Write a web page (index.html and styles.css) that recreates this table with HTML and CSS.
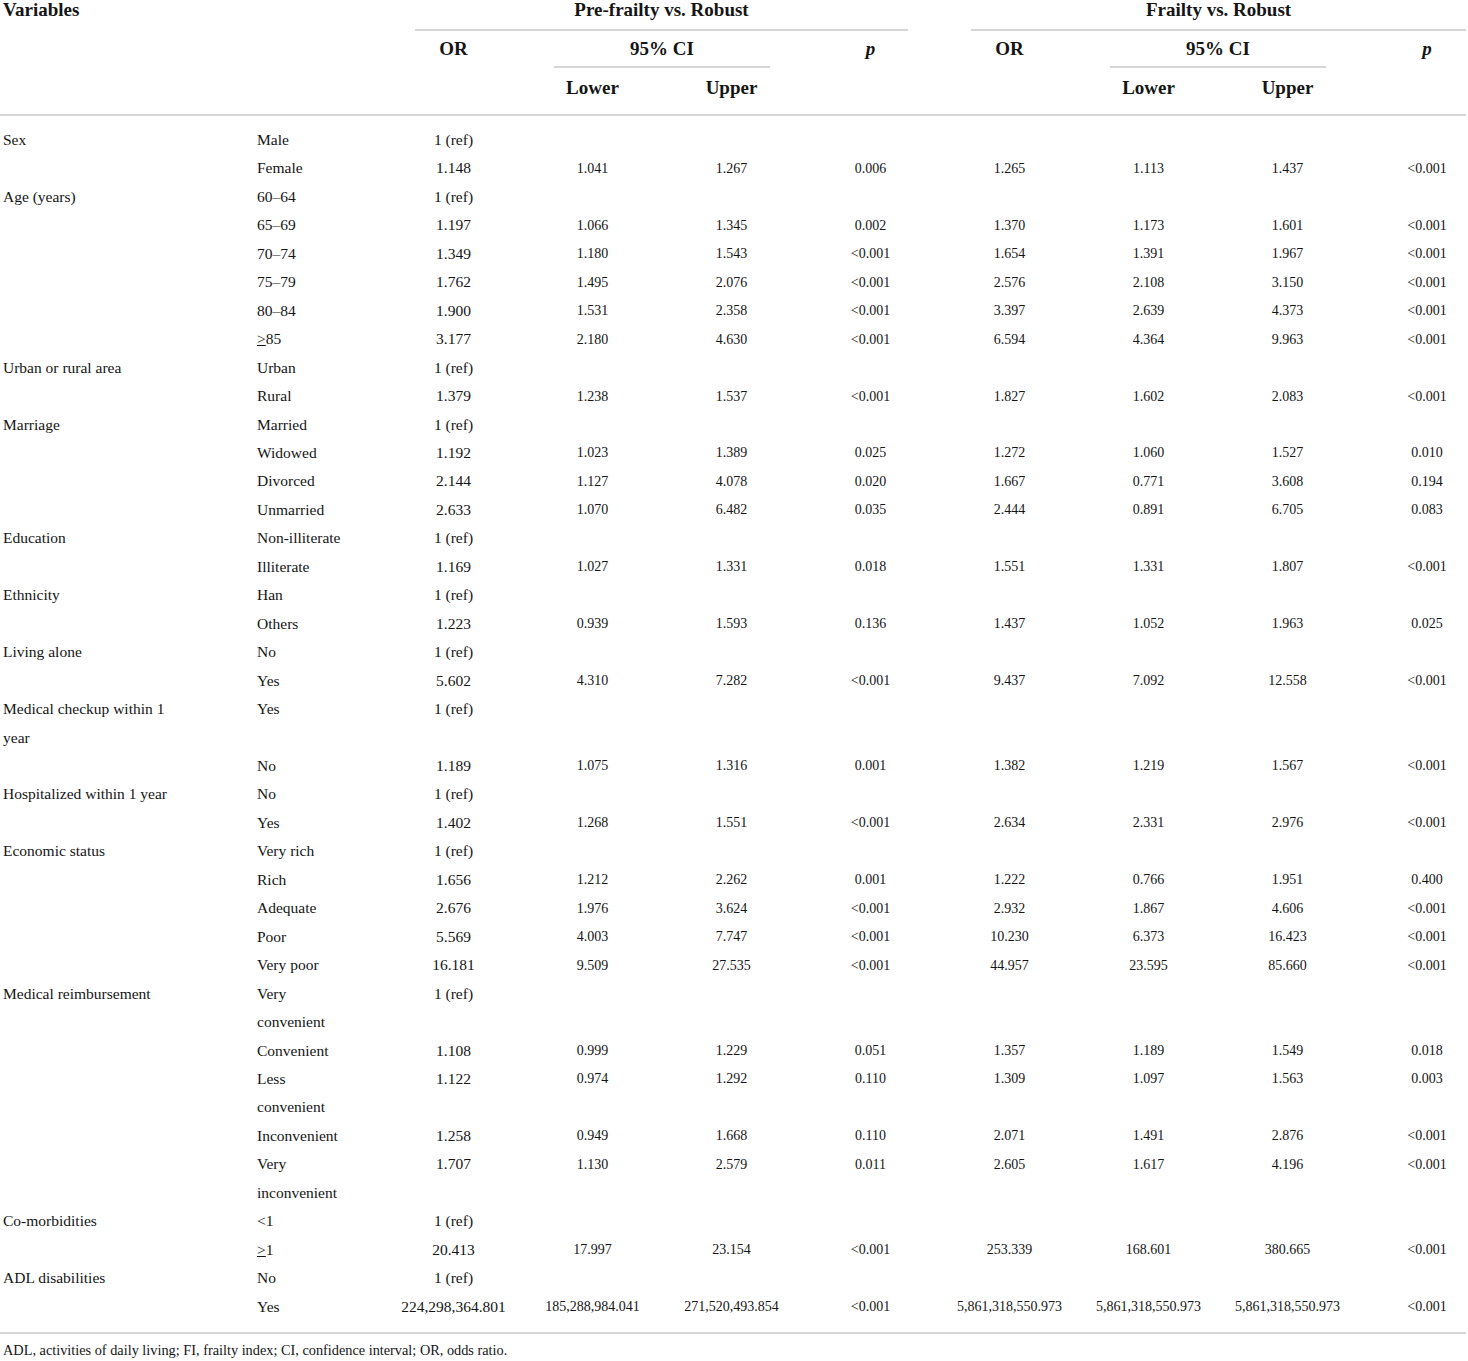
FILE: index.html
```html
<!DOCTYPE html>
<html>
<head>
    <link rel="stylesheet" href="styles.css">
</head>
<body>
    <table class="or-table">
        <colgroup>
            <col class="w-var"><col class="w-sub">
            <col class="w-num"><col class="w-num"><col class="w-num"><col class="w-num">
            <col class="w-num"><col class="w-num"><col class="w-num"><col class="w-last">
        </colgroup>
        <thead>
            <tr>
                <th class="h-var" rowspan="3" colspan="2">Variables</th>
                <th class="h-group" colspan="4"><div class="rule">Pre-frailty vs. Robust</div></th>
                <th class="h-group h-group-last" colspan="4"><div class="rule">Frailty vs. Robust</div></th>
            </tr>
            <tr>
                <th class="h-mid" rowspan="2">OR</th>
                <th class="h-ci" colspan="2"><div class="rule">95% CI</div></th>
                <th class="h-mid" rowspan="2"><i>p</i></th>
                <th class="h-mid" rowspan="2">OR</th>
                <th class="h-ci" colspan="2"><div class="rule">95% CI</div></th>
                <th class="h-mid last" rowspan="2"><i>p</i></th>
            </tr>
            <tr>
                <th class="h-low">Lower</th>
                <th class="h-low">Upper</th>
                <th class="h-low">Lower</th>
                <th class="h-low">Upper</th>
            </tr>
        </thead>
        <tbody>
            <tr><td class="var">Sex</td><td class="sub">Male</td><td class="or">1 (ref)</td><td></td><td></td><td></td><td></td><td></td><td></td><td></td></tr>
            <tr><td class="var"></td><td class="sub">Female</td><td class="or">1.148</td><td>1.041</td><td>1.267</td><td>0.006</td><td>1.265</td><td>1.113</td><td>1.437</td><td class="last">&lt;0.001</td></tr>
            <tr><td class="var">Age (years)</td><td class="sub">60–64</td><td class="or">1 (ref)</td><td></td><td></td><td></td><td></td><td></td><td></td><td></td></tr>
            <tr><td class="var"></td><td class="sub">65–69</td><td class="or">1.197</td><td>1.066</td><td>1.345</td><td>0.002</td><td>1.370</td><td>1.173</td><td>1.601</td><td class="last">&lt;0.001</td></tr>
            <tr><td class="var"></td><td class="sub">70–74</td><td class="or">1.349</td><td>1.180</td><td>1.543</td><td>&lt;0.001</td><td>1.654</td><td>1.391</td><td>1.967</td><td class="last">&lt;0.001</td></tr>
            <tr><td class="var"></td><td class="sub">75–79</td><td class="or">1.762</td><td>1.495</td><td>2.076</td><td>&lt;0.001</td><td>2.576</td><td>2.108</td><td>3.150</td><td class="last">&lt;0.001</td></tr>
            <tr><td class="var"></td><td class="sub">80–84</td><td class="or">1.900</td><td>1.531</td><td>2.358</td><td>&lt;0.001</td><td>3.397</td><td>2.639</td><td>4.373</td><td class="last">&lt;0.001</td></tr>
            <tr><td class="var"></td><td class="sub"><u>&gt;</u>85</td><td class="or">3.177</td><td>2.180</td><td>4.630</td><td>&lt;0.001</td><td>6.594</td><td>4.364</td><td>9.963</td><td class="last">&lt;0.001</td></tr>
            <tr><td class="var">Urban or rural area</td><td class="sub">Urban</td><td class="or">1 (ref)</td><td></td><td></td><td></td><td></td><td></td><td></td><td></td></tr>
            <tr><td class="var"></td><td class="sub">Rural</td><td class="or">1.379</td><td>1.238</td><td>1.537</td><td>&lt;0.001</td><td>1.827</td><td>1.602</td><td>2.083</td><td class="last">&lt;0.001</td></tr>
            <tr><td class="var">Marriage</td><td class="sub">Married</td><td class="or">1 (ref)</td><td></td><td></td><td></td><td></td><td></td><td></td><td></td></tr>
            <tr><td class="var"></td><td class="sub">Widowed</td><td class="or">1.192</td><td>1.023</td><td>1.389</td><td>0.025</td><td>1.272</td><td>1.060</td><td>1.527</td><td class="last">0.010</td></tr>
            <tr><td class="var"></td><td class="sub">Divorced</td><td class="or">2.144</td><td>1.127</td><td>4.078</td><td>0.020</td><td>1.667</td><td>0.771</td><td>3.608</td><td class="last">0.194</td></tr>
            <tr><td class="var"></td><td class="sub">Unmarried</td><td class="or">2.633</td><td>1.070</td><td>6.482</td><td>0.035</td><td>2.444</td><td>0.891</td><td>6.705</td><td class="last">0.083</td></tr>
            <tr><td class="var">Education</td><td class="sub">Non-illiterate</td><td class="or">1 (ref)</td><td></td><td></td><td></td><td></td><td></td><td></td><td></td></tr>
            <tr><td class="var"></td><td class="sub">Illiterate</td><td class="or">1.169</td><td>1.027</td><td>1.331</td><td>0.018</td><td>1.551</td><td>1.331</td><td>1.807</td><td class="last">&lt;0.001</td></tr>
            <tr><td class="var">Ethnicity</td><td class="sub">Han</td><td class="or">1 (ref)</td><td></td><td></td><td></td><td></td><td></td><td></td><td></td></tr>
            <tr><td class="var"></td><td class="sub">Others</td><td class="or">1.223</td><td>0.939</td><td>1.593</td><td>0.136</td><td>1.437</td><td>1.052</td><td>1.963</td><td class="last">0.025</td></tr>
            <tr><td class="var">Living alone</td><td class="sub">No</td><td class="or">1 (ref)</td><td></td><td></td><td></td><td></td><td></td><td></td><td></td></tr>
            <tr><td class="var"></td><td class="sub">Yes</td><td class="or">5.602</td><td>4.310</td><td>7.282</td><td>&lt;0.001</td><td>9.437</td><td>7.092</td><td>12.558</td><td class="last">&lt;0.001</td></tr>
            <tr><td class="var">Medical checkup within 1 year</td><td class="sub">Yes</td><td class="or">1 (ref)</td><td></td><td></td><td></td><td></td><td></td><td></td><td></td></tr>
            <tr><td class="var"></td><td class="sub">No</td><td class="or">1.189</td><td>1.075</td><td>1.316</td><td>0.001</td><td>1.382</td><td>1.219</td><td>1.567</td><td class="last">&lt;0.001</td></tr>
            <tr><td class="var">Hospitalized within 1 year</td><td class="sub">No</td><td class="or">1 (ref)</td><td></td><td></td><td></td><td></td><td></td><td></td><td></td></tr>
            <tr><td class="var"></td><td class="sub">Yes</td><td class="or">1.402</td><td>1.268</td><td>1.551</td><td>&lt;0.001</td><td>2.634</td><td>2.331</td><td>2.976</td><td class="last">&lt;0.001</td></tr>
            <tr><td class="var">Economic status</td><td class="sub">Very rich</td><td class="or">1 (ref)</td><td></td><td></td><td></td><td></td><td></td><td></td><td></td></tr>
            <tr><td class="var"></td><td class="sub">Rich</td><td class="or">1.656</td><td>1.212</td><td>2.262</td><td>0.001</td><td>1.222</td><td>0.766</td><td>1.951</td><td class="last">0.400</td></tr>
            <tr><td class="var"></td><td class="sub">Adequate</td><td class="or">2.676</td><td>1.976</td><td>3.624</td><td>&lt;0.001</td><td>2.932</td><td>1.867</td><td>4.606</td><td class="last">&lt;0.001</td></tr>
            <tr><td class="var"></td><td class="sub">Poor</td><td class="or">5.569</td><td>4.003</td><td>7.747</td><td>&lt;0.001</td><td>10.230</td><td>6.373</td><td>16.423</td><td class="last">&lt;0.001</td></tr>
            <tr><td class="var"></td><td class="sub">Very poor</td><td class="or">16.181</td><td>9.509</td><td>27.535</td><td>&lt;0.001</td><td>44.957</td><td>23.595</td><td>85.660</td><td class="last">&lt;0.001</td></tr>
            <tr><td class="var">Medical reimbursement</td><td class="sub">Very convenient</td><td class="or">1 (ref)</td><td></td><td></td><td></td><td></td><td></td><td></td><td></td></tr>
            <tr><td class="var"></td><td class="sub">Convenient</td><td class="or">1.108</td><td>0.999</td><td>1.229</td><td>0.051</td><td>1.357</td><td>1.189</td><td>1.549</td><td class="last">0.018</td></tr>
            <tr><td class="var"></td><td class="sub">Less convenient</td><td class="or">1.122</td><td>0.974</td><td>1.292</td><td>0.110</td><td>1.309</td><td>1.097</td><td>1.563</td><td class="last">0.003</td></tr>
            <tr><td class="var"></td><td class="sub">Inconvenient</td><td class="or">1.258</td><td>0.949</td><td>1.668</td><td>0.110</td><td>2.071</td><td>1.491</td><td>2.876</td><td class="last">&lt;0.001</td></tr>
            <tr><td class="var"></td><td class="sub">Very inconvenient</td><td class="or">1.707</td><td>1.130</td><td>2.579</td><td>0.011</td><td>2.605</td><td>1.617</td><td>4.196</td><td class="last">&lt;0.001</td></tr>
            <tr><td class="var">Co-morbidities</td><td class="sub">&lt;1</td><td class="or">1 (ref)</td><td></td><td></td><td></td><td></td><td></td><td></td><td></td></tr>
            <tr><td class="var"></td><td class="sub"><u>&gt;</u>1</td><td class="or">20.413</td><td>17.997</td><td>23.154</td><td>&lt;0.001</td><td>253.339</td><td>168.601</td><td>380.665</td><td class="last">&lt;0.001</td></tr>
            <tr><td class="var">ADL disabilities</td><td class="sub">No</td><td class="or">1 (ref)</td><td></td><td></td><td></td><td></td><td></td><td></td><td></td></tr>
            <tr><td class="var"></td><td class="sub">Yes</td><td class="or">224,298,364.801</td><td>185,288,984.041</td><td>271,520,493.854</td><td>&lt;0.001</td><td>5,861,318,550.973</td><td>5,861,318,550.973</td><td>5,861,318,550.973</td><td class="last">&lt;0.001</td></tr>
        </tbody>
    </table>
    <p class="note">ADL, activities of daily living; FI, frailty index; CI, confidence interval; OR, odds ratio.</p>
</body>
</html>
```

FILE: styles.css
```css
body {
    font-family: "Liberation Serif", "Times New Roman", serif;
    color: #151515;
    background-color: white;
    margin: 0;
    padding: 0;
}
.or-table {
    width: 1466px;
    border-collapse: collapse;
    table-layout: fixed;
}
.w-var { width: 254px; }
.w-sub { width: 130px; }
.w-num { width: 139px; }
.w-last { width: 109px; }

/* header */
.or-table th {
    font-size: 19px;
    font-weight: bold;
    line-height: 20px;
    text-align: center;
    vertical-align: top;
    padding: 0;
}
.or-table thead {
    border-bottom: 2px solid #d6d6d6;
}
.or-table .rule {
    border-bottom: 2px solid #d6d6d6;
}
.h-var {
    text-align: left !important;
    padding-left: 3px !important;
}
.h-group {
    padding: 0 32px 0 31px !important;
}
.h-group .rule {
    padding-bottom: 9px;
}
.h-group-last {
    padding-right: 0 !important;
}
.h-mid {
    padding-top: 8px !important;
}
.h-mid.last {
    padding-left: 31px !important;
}
.h-ci {
    padding: 8px 31px 0 31px !important;
}
.h-ci .rule {
    padding-bottom: 7px;
}
.h-low {
    padding-top: 10px !important;
    padding-bottom: 16px !important;
}

/* body */
.or-table td {
    font-size: 14px;
    line-height: 27.96px;
    text-align: center;
    vertical-align: top;
    padding: 0.5px 0 0 0;
    white-space: nowrap;
}
.or-table td.var,
.or-table td.sub,
.or-table td.or {
    font-size: 15.5px;
    line-height: 28.46px;
    padding-top: 0;
}
.or-table td.var {
    text-align: left;
    white-space: normal;
    padding: 0 81px 0 3px;
}
.or-table td.sub {
    text-align: left;
    white-space: normal;
    padding: 0 37px 0 3px;
}
.or-table td.last {
    padding-left: 31px;
}
.or-table td u {
    text-decoration-thickness: 1px;
    text-underline-offset: 1px;
}
.or-table tbody tr:first-child td {
    padding-top: 10px;
}
.or-table tbody tr:last-child td {
    padding-bottom: 11px;
}
.or-table tbody {
    border-bottom: 2px solid #d6d6d6;
}
.note {
    font-size: 14.3px;
    line-height: 20px;
    margin: 6px 0 0 0;
    padding-left: 3px;
}
```
